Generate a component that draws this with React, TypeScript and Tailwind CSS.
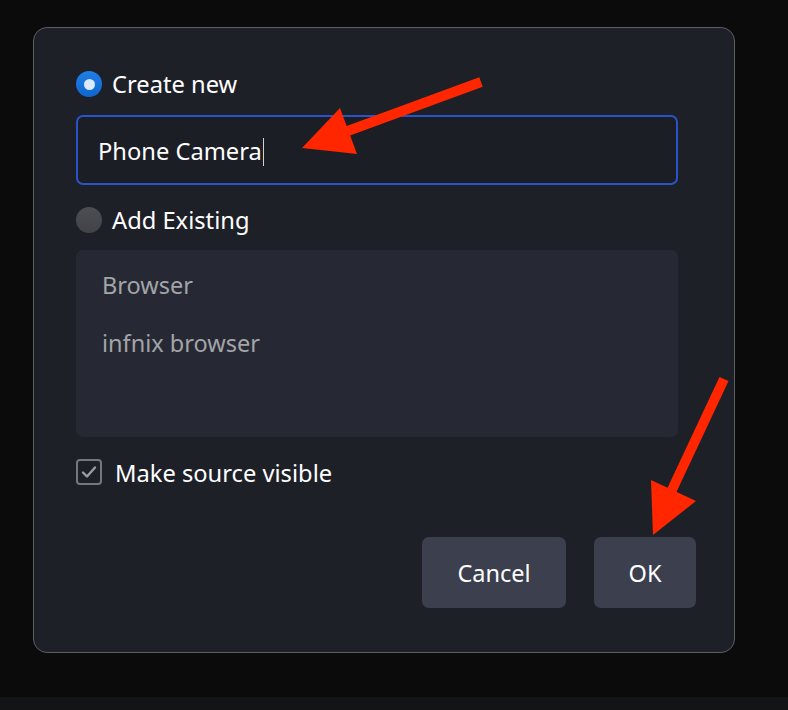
import React from "react";

export default function App() {
  return (
    <div
      className="relative w-[788px] h-[710px] bg-[#0b0b0b] overflow-hidden flex flex-col"
      style={{ fontFamily: '"Noto Sans", "Open Sans", sans-serif' }}
    >
      <div className="flex-1 pl-[33px] pt-[27px]">
        <div className="w-[702px] h-[626px] rounded-[14px] border border-[#5c5d61] bg-[#1e2028] pl-[42px] pt-[43px] flex flex-col">
          <label className="flex items-center h-[26px] gap-[10px]">
            <span className="w-[26px] h-[26px] rounded-full bg-gradient-to-b from-[#1f7fe8] to-[#0f66cc] flex items-center justify-center">
              <span className="w-[11px] h-[11px] rounded-full bg-[#dbe9fb]" />
            </span>
            <span className="text-[23.7px] leading-none text-white pt-[2px]">Create new</span>
          </label>

          <div className="mt-[18px] w-[602px] h-[70px] rounded-[7px] border-2 border-[#2a52c9] bg-[#1c1e25] flex items-center pl-[20px] pt-[3px]">
            <span className="text-[23.7px] leading-none text-white">Phone Camera</span>
            <span className="ml-[1px] w-[1px] h-[28px] bg-[#d8d2c0]" />
          </div>

          <label className="mt-[22px] flex items-center h-[26px] gap-[10px]">
            <span className="w-[26px] h-[26px] rounded-full bg-gradient-to-b from-[#4d4e53] to-[#424348]" />
            <span className="text-[23.7px] leading-none text-white pt-[2px]">Add Existing</span>
          </label>

          <div className="mt-[17px] w-[602px] h-[187px] rounded-[7px] bg-[#262933] pl-[26px] pt-[21px] flex flex-col gap-[30px]">
            <span className="text-[23.5px] leading-[28px] text-[#a3a4a8]">Browser</span>
            <span className="text-[23.5px] leading-[28px] text-[#a3a4a8]">infnix browser</span>
          </div>

          <label className="mt-[22px] flex items-center h-[26px] gap-[13px]">
            <span className="w-[26px] h-[26px] rounded-[4px] border-2 border-[#76777c] flex items-center justify-center">
              <svg width="18" height="18" viewBox="0 0 18 18" fill="none">
                <path d="M3 9.5 L7 13.5 L15 4.5" stroke="#9c9da1" strokeWidth="2.4" strokeLinecap="round" strokeLinejoin="round" />
              </svg>
            </span>
            <span className="text-[23.7px] leading-none text-white pt-[3px]">Make source visible</span>
          </label>

          <div className="mt-[52px] flex gap-[28px] pl-[346px]">
            <button className="w-[144px] h-[71px] rounded-[7px] bg-[#3b3f4e] text-white text-[23.5px] pt-[3px]">Cancel</button>
            <button className="w-[102px] h-[71px] rounded-[7px] bg-[#3b3f4e] text-white text-[23.5px] pt-[3px]">OK</button>
          </div>
        </div>
      </div>
      <div className="h-[13px] bg-[#131416]" />

      <svg className="absolute inset-0 pointer-events-none" width="788" height="710" viewBox="0 0 788 710">
        <line x1="481" y1="82" x2="345" y2="132" stroke="#ff2600" strokeWidth="10" />
        <polygon points="302,148 340,108 357,154" fill="#ff2600" />
        <line x1="724" y1="379" x2="671" y2="492" stroke="#ff2600" strokeWidth="10" />
        <polygon points="653,535 651,480 696,501" fill="#ff2600" />
      </svg>
    </div>
  );
}
